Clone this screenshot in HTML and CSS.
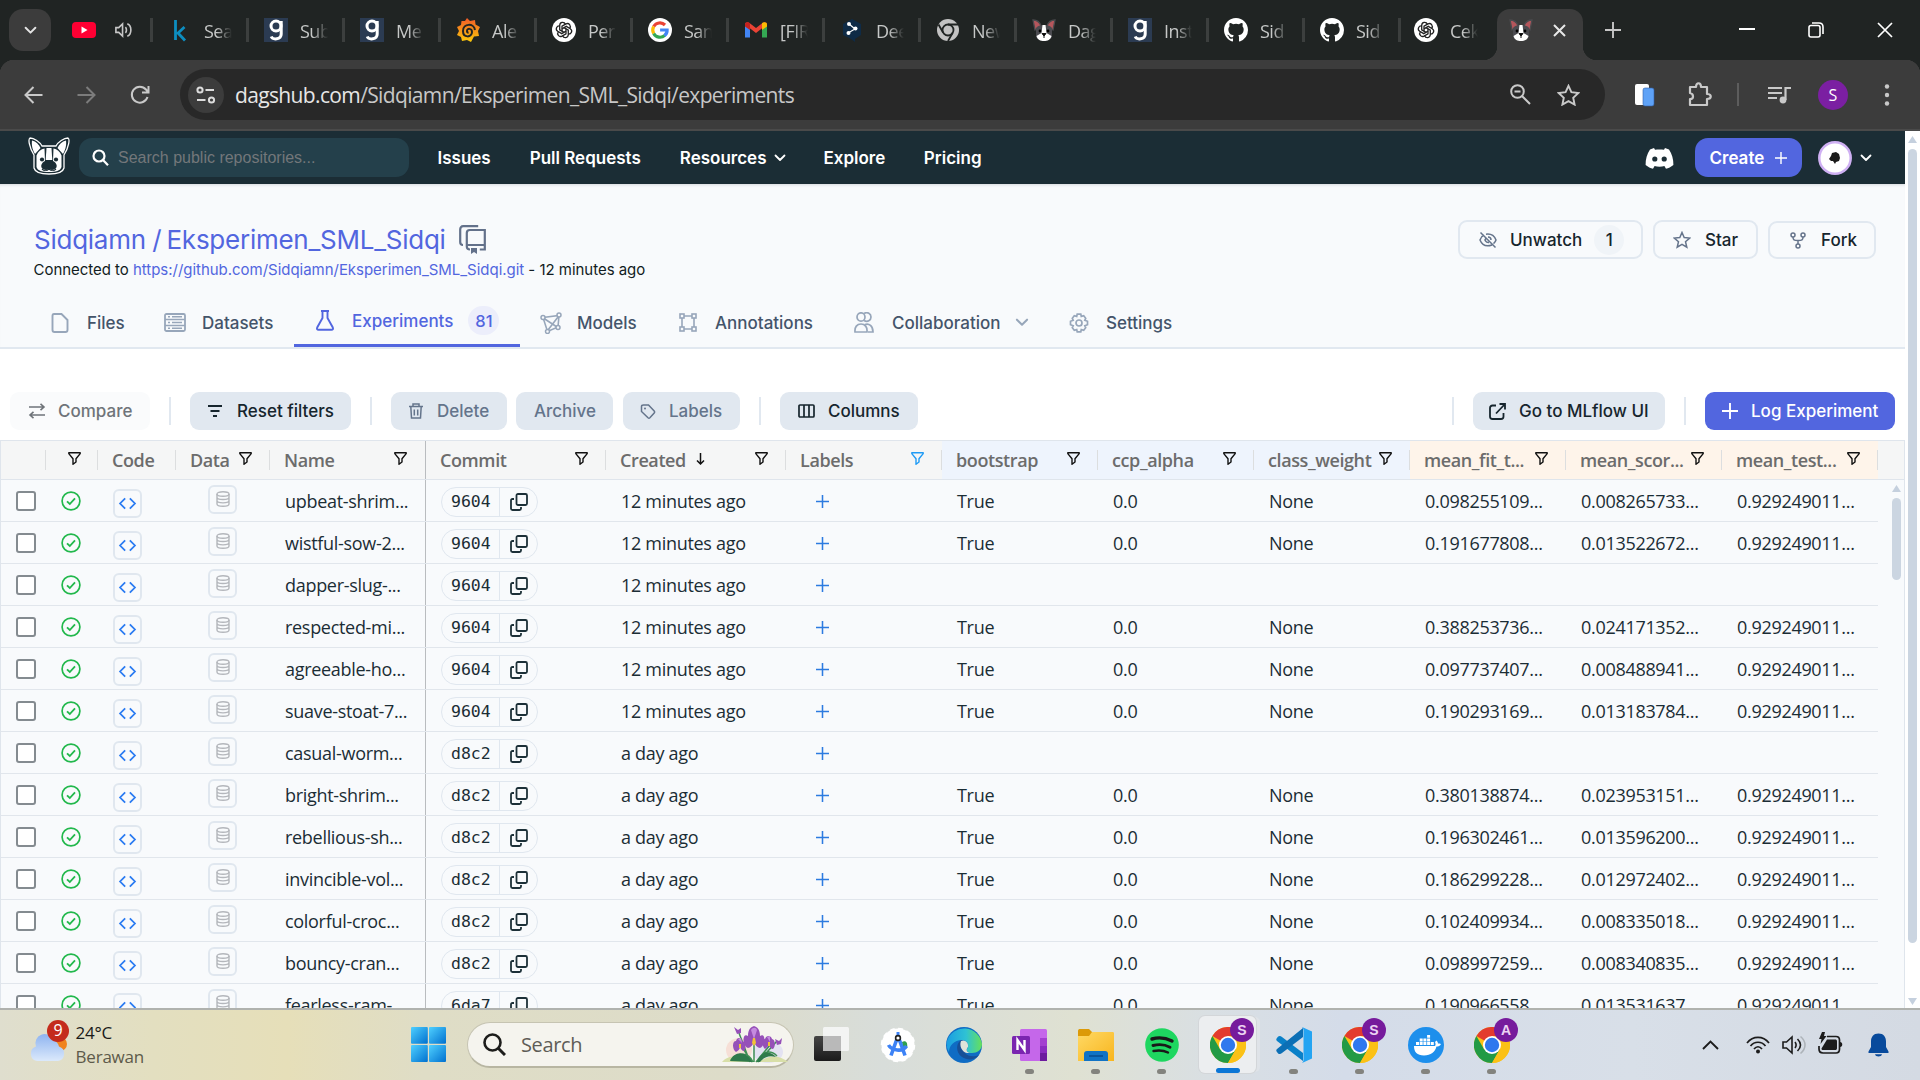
FILE: index.html
```html
<!DOCTYPE html>
<html lang="en">
<head>
<meta charset="utf-8">
<title>Sidqiamn/Eksperimen_SML_Sidqi - Experiments</title>
<link rel="stylesheet" href="styles.css">
</head>
<body>
<svg class="defs" aria-hidden="true">
  <linearGradient id="gWin" x1="0" y1="0" x2="1" y2="1"><stop offset="0" stop-color="#4fd0ff"/><stop offset="1" stop-color="#0070cf"/></linearGradient>
  <linearGradient id="gEdge" x1="0" y1="0" x2="1" y2="0"><stop offset="0" stop-color="#1b9de2"/><stop offset=".55" stop-color="#2fc2d4"/><stop offset="1" stop-color="#66e05a"/></linearGradient>
  <linearGradient id="gCloud" x1="0" y1="0" x2="0" y2="1"><stop offset="0" stop-color="#8fb4f0"/><stop offset="1" stop-color="#dbe9fb"/></linearGradient>
  <linearGradient id="gFolder" x1="0" y1="0" x2="1" y2="1"><stop offset="0" stop-color="#ffd965"/><stop offset="1" stop-color="#f8b51e"/></linearGradient>
  <linearGradient id="gDark" x1="0" y1="0" x2="0" y2="1"><stop offset="0" stop-color="#454545"/><stop offset="1" stop-color="#1a1a1a"/></linearGradient>
  <linearGradient id="gGraf" x1="0" y1="0" x2="0" y2="1"><stop offset="0" stop-color="#f05a28"/><stop offset="1" stop-color="#fbca0a"/></linearGradient>
  <symbol id="i-chev" viewBox="0 0 12 8"><path d="M1.5 1.5 6 6l4.500-4.500" fill="none" stroke="currentColor" stroke-width="1.800" stroke-linecap="round" stroke-linejoin="round"/></symbol>
  <symbol id="i-yt" viewBox="0 0 24 16"><rect width="24" height="16" rx="4" fill="#ff0033"/><path d="m9.500 4.500 6 3.500-6 3.500z" fill="#fff"/></symbol>
  <symbol id="i-spk" viewBox="0 0 20 18"><path d="M2 6.500h3l4-4v13l-4-4H2zM12 6c1.500 1.500 1.500 4.500 0 6M14 2.500c5 2 5 11 0 13" fill="none" stroke="#c7c7c7" stroke-width="1.700"/></symbol>
  <symbol id="i-k" viewBox="0 0 24 24"><path d="M7.500 2v20M16.500 9 9 16m1-1 7 7.500" fill="none" stroke="#0d8ec0" stroke-width="2.800"/></symbol>
  <symbol id="i-g" viewBox="0 0 24 24"><rect width="24" height="24" fill="#2b3b52"/><circle cx="12" cy="8" r="5" fill="none" stroke="#fff" stroke-width="3"/><path d="M17.200 3v13c0 6-8.500 6-10 2.500" fill="none" stroke="#fff" stroke-width="3"/></symbol>
  <symbol id="i-graf" viewBox="0 0 24 24"><path d="m11 0 3 3 5-1 .5 4.500L24 9l-2 4 1 5-5 .5L15 24l-4-2-5 1-1-4-4-2 2-4-2-4 4-2 .5-4L9 3z" fill="url(#gGraf)"/><path d="M19 12c-1-7-12-7-12 1 0 7 9 7 9 1 0-4-5-4-5-1 0 1 .7 1.700 1.600 1.700" fill="none" stroke="#202423" stroke-width="2"/></symbol>
  <symbol id="i-gpt" viewBox="0 0 24 24"><circle cx="12" cy="12" r="12" fill="#fff"/><g fill="none" stroke="#222" stroke-width="1.300"><g id="petal"><path d="M10 13.200V8.200l4-2.300c3-1.500 5.500 2 3.600 4.500"/></g><use href="#petal" transform="rotate(60 12 12)"/><use href="#petal" transform="rotate(120 12 12)"/><use href="#petal" transform="rotate(180 12 12)"/><use href="#petal" transform="rotate(240 12 12)"/><use href="#petal" transform="rotate(300 12 12)"/></g></symbol>
  <symbol id="i-goo" viewBox="0 0 24 24"><circle cx="12" cy="12" r="12" fill="#fff"/><g fill="none" stroke-width="3.200"><path d="M17 7A7.200 7.200 0 0 0 5.700 8.500" stroke="#ea4335"/><path d="M5.700 8.500a7.200 7.200 0 0 0 0 7" stroke="#fbbc05"/><path d="M5.700 15.500A7.200 7.200 0 0 0 16.800 17.400" stroke="#34a853"/><path d="M16.500 17.600c2-1.500 2.700-3.500 2.600-5.600h-7" stroke="#4285f4"/></g></symbol>
  <symbol id="i-mail" viewBox="0 0 24 24"><path d="M1 6v13.500h5V10z" fill="#4285f4"/><path d="M23 6v13.500h-5V10z" fill="#34a853"/><path d="M1 6.500C1 4 4 3.500 5.500 5L12 10l6.500-5C20 3.500 23 4 23 6.500L12 15z" fill="#ea4335"/><path d="M1 6.500C1 4 4 3.500 6 5.200V12L1 8.500z" fill="#c5221f"/><path d="M23 6.500c0-2.500-3-3-5-1.300V12l5-3.500z" fill="#fbbc04"/></symbol>
  <symbol id="i-deep" viewBox="0 0 24 24"><path d="m12 1 9 5v11l-6 4v3l-4-3-8-4V6z" fill="#0f2b46"/><path d="m9 6 6 5-7 4" fill="none" stroke="#fff" stroke-width="1.200"/><circle cx="9" cy="6" r="2" fill="#fff"/><circle cx="15.500" cy="10.500" r="2" fill="#fff"/><circle cx="8.500" cy="15" r="2" fill="#fff"/></symbol>
  <symbol id="i-newt" viewBox="0 0 24 24"><circle cx="12" cy="12" r="11" fill="#c3c3c3"/><circle cx="12" cy="12" r="5.500" fill="#c3c3c3" stroke="#202423" stroke-width="1.800"/><path d="M12 6.500h10M7.200 14.700 2.500 6.500M16.700 14.700 12 23" stroke="#202423" stroke-width="1.800"/></symbol>
  <symbol id="i-dog" viewBox="0 0 24 24"><path d="M1 2c4 0 7 3 8 6l-6 4zM23 2c-4 0-7 3-8 6l6 4z" fill="#b5565c" stroke="#4b4b4e" stroke-width="1.300"/><path d="M4 10c2-4 14-4 16 0v8c0 3-4 4-8 4s-8-1-8-4z" fill="#4b4b50"/><path d="M10.500 7h3l1 8 5 3c-1 4-4 5-7.500 5s-6.500-1-7.500-5l5-3z" fill="#fff"/><circle cx="8" cy="13" r="1.400"/><circle cx="16" cy="13" r="1.400"/><path d="M10 15.500h4L12 18zM12 18v2" stroke="#111"/></symbol>
  <symbol id="i-gh" viewBox="0 0 16 16"><path fill="#fff" d="M8 0C3.580 0 0 3.580 0 8c0 3.540 2.290 6.530 5.470 7.590.4.070.55-.17.55-.38 0-.19-.01-.82-.01-1.490-2.010.37-2.530-.49-2.690-.94-.09-.23-.48-.94-.82-1.130-.28-.15-.68-.52-.01-.53.63-.01 1.080.58 1.230.82.72 1.210 1.870.87 2.330.66.07-.52.28-.87.51-1.070-1.780-.2-3.640-.89-3.640-3.950 0-.87.31-1.590.82-2.150-.08-.2-.36-1.020.08-2.120 0 0 .67-.21 2.200.82a7.600 7.600 0 0 1 4 0c1.530-1.040 2.200-.82 2.200-.82.44 1.100.16 1.920.08 2.120.51.56.82 1.270.82 2.150 0 3.070-1.870 3.750-3.650 3.950.29.25.54.73.54 1.480 0 1.070-.01 1.930-.01 2.200 0 .21.15.46.55.38A8 8 0 0 0 16 8c0-4.420-3.580-8-8-8z"/></symbol>
  <symbol id="i-funnel" viewBox="0 0 13 13"><path d="M.8.8h11.400v.8L8 6.800V10l-3 2.300V6.800L.8 1.600z" fill="none" stroke="currentColor" stroke-width="1.400" stroke-linejoin="round"/></symbol>
  <symbol id="i-check" viewBox="0 0 20 20"><circle cx="10" cy="10" r="8.900" fill="none" stroke="#22b84c" stroke-width="1.700"/><path d="m6 10.300 2.800 2.700 5.200-5.700" fill="none" stroke="#22b84c" stroke-width="1.800"/></symbol>
  <symbol id="i-code" viewBox="0 0 20 14"><path d="M7.500 1.500 2 7l5.500 5.500M12.500 1.500 18 7l-5.500 5.500" fill="none" stroke="#2a7bf2" stroke-width="1.900"/></symbol>
  <symbol id="i-db" viewBox="0 0 14 16"><g fill="none" stroke="#b4b7bc" stroke-width="1.400"><ellipse cx="7" cy="3" rx="6" ry="2.200"/><path d="M1 3v10c0 3 12 3 12 0V3M1 6.300c0 3 12 3 12 0M1 9.600c0 3 12 3 12 0"/></g></symbol>
  <symbol id="i-copy" viewBox="0 0 18 18"><g fill="none" stroke="#1c3038" stroke-width="1.800"><rect x="6.500" y="1" width="10.500" height="11" rx="1.500"/><path d="M4 6H2.500C1.500 6 1 6.500 1 7.500v8c0 1 .5 1.500 1.500 1.500h7c1 0 1.500-.5 1.500-1.500V14"/></g></symbol>
  <symbol id="i-plus" viewBox="0 0 16 16"><path d="M8 0v16M0 8h16" stroke="currentColor" stroke-width="1.900"/></symbol>
  <symbol id="i-chrome" viewBox="0 0 36 36"><circle cx="18" cy="18" r="18" fill="#fbc116"/><path d="M18 18 2.400 9A18 18 0 0 1 33.600 9H18z" fill="#e33b2e"/><path d="M2.400 9 10.200 22.500 18 18l7.800 4.500L18 36A18 18 0 0 1 2.400 9z" fill="#229a45"/><path d="M18 9h15.600A18 18 0 0 1 18 36l7.800-13.500z" fill="#fbc116"/><circle cx="18" cy="18" r="9" fill="#fff"/><circle cx="18" cy="18" r="7.200" fill="#2f78ee"/></symbol>
</svg>

<header class="tabstrip">
  <button class="tabsearch"><svg width="13" height="9"><use href="#i-chev"/></svg></button>
  <div class="pinned"><svg width="24" height="16"><use href="#i-yt"/></svg><svg width="19" height="18"><use href="#i-spk"/></svg></div>
  <div class="tab"><svg width="24" height="24"><use href="#i-k"/></svg><span>Sea</span></div>
  <div class="tab"><svg width="24" height="24"><use href="#i-g"/></svg><span>Sub</span></div>
  <div class="tab"><svg width="24" height="24"><use href="#i-g"/></svg><span>Me</span></div>
  <div class="tab"><svg width="24" height="24"><use href="#i-graf"/></svg><span>Ale</span></div>
  <div class="tab"><svg width="24" height="24"><use href="#i-gpt"/></svg><span>Per</span></div>
  <div class="tab"><svg width="24" height="24"><use href="#i-goo"/></svg><span>San</span></div>
  <div class="tab"><svg width="24" height="24"><use href="#i-mail"/></svg><span>[FIR</span></div>
  <div class="tab"><svg width="24" height="24"><use href="#i-deep"/></svg><span>Dee</span></div>
  <div class="tab"><svg width="24" height="24"><use href="#i-newt"/></svg><span>New</span></div>
  <div class="tab"><svg width="24" height="24"><use href="#i-dog"/></svg><span>Dag</span></div>
  <div class="tab"><svg width="24" height="24"><use href="#i-g"/></svg><span>Inst</span></div>
  <div class="tab"><svg width="24" height="24"><use href="#i-gh"/></svg><span>Sid</span></div>
  <div class="tab"><svg width="24" height="24"><use href="#i-gh"/></svg><span>Sid</span></div>
  <div class="tab last"><svg width="24" height="24"><use href="#i-gpt"/></svg><span>Cek</span></div>
  <div class="tab-active"><svg width="24" height="24"><use href="#i-dog"/></svg><svg width="13" height="13" viewBox="0 0 13 13"><path d="m1 1 11 11M12 1 1 12" stroke="#e8e8e8" stroke-width="2"/></svg></div>
  <button class="newtab"><svg width="16" height="16"><use href="#i-plus"/></svg></button>
  <div class="winctl">
    <svg width="16" height="16" viewBox="0 0 16 16"><path d="M0 7h16" stroke="#fff" stroke-width="2"/></svg>
    <svg width="16" height="16" viewBox="0 0 16 16"><g fill="none" stroke="#fff" stroke-width="1.600"><rect x="1" y="3.500" width="11" height="11.500" rx="2"/><path d="M4 1h7c3 0 4 1 4 4v7"/></g></svg>
    <svg width="16" height="16" viewBox="0 0 16 16"><path d="m1 1 14 14M15 1 1 15" stroke="#fff" stroke-width="1.700"/></svg>
  </div>
</header>

<div class="navbar">
  <div class="navbtns">
    <svg width="19" height="18" viewBox="0 0 19 18"><path d="M18.500 9H2M9.500 1 1.500 9l8 8" fill="none" stroke="#c9c9c9" stroke-width="2"/></svg>
    <svg width="19" height="18" viewBox="0 0 19 18"><path d="M.5 9H17M9.500 1l8 8-8 8" fill="none" stroke="#7c7c7c" stroke-width="2"/></svg>
    <svg width="20" height="20" viewBox="0 0 20 20"><path d="M17.500 12A8 8 0 1 1 16 4.500L18 7M18.500 1v6.500H12" fill="none" stroke="#c9c9c9" stroke-width="2"/></svg>
  </div>
  <div class="omnibox">
    <span class="tune"><svg width="20" height="18" viewBox="0 0 20 18"><g fill="none" stroke="#dcdcdc" stroke-width="2"><circle cx="4" cy="4" r="2.600"/><path d="M9.500 4H18M1 14h8.500"/><circle cx="15.500" cy="14" r="2.600"/></g></svg></span>
    <span class="url"><b>dagshub.com</b>/Sidqiamn/Eksperimen_SML_Sidqi/experiments</span>
    <svg class="zoomer" width="21" height="21" viewBox="0 0 21 21"><g fill="none" stroke="#c9c9c9" stroke-width="2"><circle cx="7.500" cy="7.500" r="6.300"/><path d="m12 12 8 8M4.500 7.500h6"/></g></svg>
    <svg width="23" height="22" viewBox="0 0 23 22"><path d="m11.500 1.800 2.900 6.400 7 .8-5.200 4.800 1.400 6.800-6.100-3.400-6.100 3.400 1.400-6.800L1.600 9l7-.8z" fill="none" stroke="#c9c9c9" stroke-width="1.900"/></svg>
  </div>
  <div class="exts">
    <svg width="20" height="24" viewBox="0 0 20 24"><rect x="0" y="1" width="14" height="21" rx="2" fill="#fff"/><rect x="8" y="5" width="11" height="18" rx="2" fill="#5ea2f7" stroke="#2f5fa8" stroke-width=".6"/></svg>
    <svg width="25" height="25" viewBox="0 0 25 25"><path d="M3 5h6c0-5 5-5 5 0h6v7c5 0 5 5 0 5v6H3v-6c4 0 4-5 0-6z" fill="none" stroke="#c9c9c9" stroke-width="2.200" stroke-linejoin="round"/></svg>
    <i class="vsep"></i>
    <svg width="23" height="18" viewBox="0 0 23 18"><path d="M0 2h14M0 7h14M0 12h9" stroke="#c9c9c9" stroke-width="2"/><circle cx="15" cy="14" r="3.400" fill="#c9c9c9"/><path d="M17.500 14V2H23" fill="none" stroke="#c9c9c9" stroke-width="2.200"/></svg>
    <span class="avatar-s">S</span>
    <svg width="6" height="22" viewBox="0 0 6 22"><g fill="#c9c9c9"><circle cx="3" cy="2.500" r="2.200"/><circle cx="3" cy="11" r="2.200"/><circle cx="3" cy="19.500" r="2.200"/></g></svg>
  </div>
</div>

<div class="viewport">
<main class="page">
  <nav class="site">
    <svg class="logo" width="42" height="38" viewBox="0 0 42 38"><path d="M6 18C1 10 0 2 2 1c4 0 10 4 12 8h14c2-4 8-8 12-8 2 1 1 9-4 17v13c-1 4-6 6-15 6S7 35 6 31z" fill="#1b2d35" stroke="#fff" stroke-width="1.300"/><path d="M4 3.500c4 1 7 4 8.500 7.500l-5.500 6C4 12 3.500 7 4 3.500zM38 3.500c-4 1-7 4-8.500 7.500l5.500 6c3-5 3.500-10 3-13.500z" fill="#fff"/><path d="M18.500 11h5l.8 12h-6.600z" fill="#fff"/><path d="M8.500 18.500c1.500-4 4.500-6.500 8-7l.5 12.500c-4 2-5 6-2 8 2 1.300 4 1.300 6 0 2 1.300 4 1.300 6 0 3-2 2-6-2-8l.5-12.500c3.500.5 6.500 3 8 7v11.500c-1 4-6 5-12.500 5s-11.500-1-12.500-5z" fill="#fff"/><circle cx="14" cy="22.500" r="2.100" fill="#1b2d35"/><circle cx="28" cy="22.500" r="2.100" fill="#1b2d35"/><path d="M17.500 25.500h7c.5 1.500-2 3.500-3.500 3.500s-4-2-3.500-3.500z" fill="#1b2d35"/><path d="M21 29v3c-2 2-5 2-7 0M21 32c2 2 5 2 7 0" fill="none" stroke="#1b2d35" stroke-width="1.100"/></svg>
    <div class="search"><svg width="17" height="17" viewBox="0 0 17 17"><g fill="none" stroke="#fff" stroke-width="2.200"><circle cx="7" cy="7" r="5.500"/><path d="m11 11 5 5.200"/></g></svg><span>Search public repositories...</span></div>
    <div class="links"><a>Issues</a><a>Pull Requests</a><a class="res"><span>Resources</span><svg width="12" height="8"><use href="#i-chev"/></svg></a><a class="explore">Explore</a><a>Pricing</a></div>
    <svg class="discord" width="29" height="22" viewBox="0 0 29 22"><path d="M9 1 5 2.500C2 7 .5 12 .6 18c2.400 2 5 3.300 7.400 3.800l1.600-2.700c3 .9 6.800.9 9.800 0L21 21.800c2.400-.5 5-1.800 7.400-3.800.1-6-1.400-11-4.400-15.500L20 1l-1 1.800c-3-.5-6-.5-9 0z" fill="#fff"/><circle cx="9.800" cy="12" r="2.600" fill="#1b2d35"/><circle cx="19.200" cy="12" r="2.600" fill="#1b2d35"/></svg>
    <button class="create"><span>Create</span><svg width="12" height="12"><use href="#i-plus"/></svg></button>
    <span class="user"><svg width="34" height="34" viewBox="0 0 34 34"><circle cx="17" cy="17" r="15.700" fill="#fff" stroke="#cfb0f3" stroke-width="2.500"/><path d="m11 18 2-3 1-3 4-1 3 2 1 4-1 3-3 1-1 2-2-3-2 0z" fill="#1a1a1a"/></svg></span>
    <svg class="uchev" width="12" height="8"><use href="#i-chev"/></svg>
  </nav>

  <section class="repo">
    <div class="repo-top">
      <div class="repo-id">
        <h1><span>Sidqiamn</span><em>/</em><span>Eksperimen_SML_Sidqi</span>
          <svg width="27" height="29" viewBox="0 0 27 29"><g fill="none" stroke="#63718a" stroke-width="2.200"><path d="M4 20c-2 0-2.800-1-2.800-3V4.500c0-2 1-3.300 3-3.300h15"/><path d="M11 24.500c-2 0-3.200-.8-3.200-3V8c0-2 1-3 3-3h15v19.500h-5M8 20h17"/></g><path d="M12 23h6v6l-3-2-3 2z" fill="#63718a"/></svg></h1>
        <p>Connected to <a>https://github.com/Sidqiamn/Eksperimen_SML_Sidqi.git</a> - 12 minutes ago</p>
      </div>
      <div class="actions">
        <button class="b-watch"><svg width="18" height="18" viewBox="0 0 18 18"><g fill="none" stroke="#65748b" stroke-width="1.500"><path d="M5 4C3 5 1.500 7 1 9c2 5 6 7 12 5M7 3.200c5-.7 8.500 2 10 5.800-.5 1.500-1.300 2.700-2.500 3.700M1.500 1.500l15 15M7 7c-2 2 0 5 3 4.500M9 6c1.800 0 3 1.200 3 3"/></g></svg><span>Unwatch</span><i>1</i></button>
        <button class="b-star"><svg width="18" height="18" viewBox="0 0 18 18"><path d="m9 1.500 2.200 5.100 5.500.5-4.200 3.600 1.300 5.500L9 13.300l-4.800 2.900 1.300-5.500L1.300 7.100l5.500-.5z" fill="none" stroke="#65748b" stroke-width="1.500"/></svg><span>Star</span></button>
        <button class="b-fork"><svg width="16" height="17" viewBox="0 0 16 17"><g fill="none" stroke="#65748b" stroke-width="1.500"><circle cx="3" cy="3" r="2"/><circle cx="13" cy="3" r="2"/><circle cx="8" cy="14" r="2"/><path d="M3 5c0 3 1 3.500 5 3.500S13 8 13 5M8 8.500V12"/></g></svg><span>Fork</span></button>
      </div>
    </div>
    <div class="repo-tabs">
      <a class="rt fi-tab"><svg width="18" height="20" viewBox="0 0 18 20"><path d="M3 1h7.500L16.500 7v10c0 1.500-.5 2-2 2h-11c-1.500 0-2-.5-2-2V3c0-1.500.5-2 1.500-2z" fill="none" stroke="#97a6ba" stroke-width="1.900"/></svg><span>Files</span></a>
      <a class="rt ds"><svg width="22" height="19" viewBox="0 0 22 19"><g fill="none" stroke="#97a6ba" stroke-width="1.800"><rect x="1" y="1" width="20" height="17" rx="1.500"/><path d="M1 6.500h20M1 12.500h20M4 3.800h2M8 3.800h10M4 9.500h2M8 9.500h10M4 15.300h2M8 15.300h10" stroke-width="1.400"/></g></svg><span>Datasets</span></a>
      <a class="rt on"><svg width="18" height="21" viewBox="0 0 18 21"><path d="M5 1h8M6.500 1v7L1.200 17.500c-.6 1.500 0 2.300 1.300 2.300h13c1.300 0 1.900-.8 1.300-2.300L11.500 8V1" fill="none" stroke="#5266df" stroke-width="1.900"/></svg><span>Experiments</span><i>81</i></a>
      <a class="rt md"><svg width="22" height="22" viewBox="0 0 22 22"><g fill="none" stroke="#97a6ba" stroke-width="1.600"><path d="M3 5.500 19 3.500 18 15 7.500 19.500zM4 6.500l13 8.500M18 5 8 18"/></g><g fill="#f8fafc" stroke="#97a6ba" stroke-width="1.500"><circle cx="3" cy="5.500" r="2"/><circle cx="19" cy="3" r="2"/><circle cx="18" cy="15.500" r="2"/><circle cx="7.500" cy="19.500" r="2"/></g></svg><span>Models</span></a>
      <a class="rt an"><svg width="18" height="19" viewBox="0 0 18 19"><g fill="none" stroke="#97a6ba" stroke-width="1.600"><path d="M5 3h8M5 16h8M3 5v9M15 5v9"/><rect x="1" y="1" width="4" height="4"/><rect x="13" y="1" width="4" height="4"/><rect x="1" y="14" width="4" height="4"/><rect x="13" y="14" width="4" height="4"/></g></svg><span>Annotations</span></a>
      <a class="rt co"><svg width="20" height="21" viewBox="0 0 20 21"><g fill="none" stroke="#97a6ba" stroke-width="1.700"><ellipse cx="7" cy="5" rx="4" ry="4.200"/><path d="M10 1.500c3.500-2 7 0 7 3.500s-3.500 5.500-7 3.500M1 20c-.5-5 2-8 6-8s6.500 3 6 8zM11 12.500c4-1.500 8 1.500 8 7.500h-5"/></g></svg><span>Collaboration</span><svg class="cv" width="14" height="9"><use href="#i-chev"/></svg></a>
      <a class="rt se"><svg width="20" height="20" viewBox="0 0 20 20"><g fill="none" stroke="#97a6ba" stroke-width="1.700"><path d="m8.200 1.200h3.600l.5 2.200 2.400-.6 2 2.500-.9 2 2.700 1v3.400l-2.700 1 .9 2-2 2.500-2.400-.6-.5 2.200H8.200l-.5-2.200-2.400.6-2-2.500.9-2-2.700-1V8.300l2.700-1-.9-2 2-2.500 2.400.6z"/><circle cx="10" cy="10" r="3"/></g></svg><span>Settings</span></a>
    </div>
  </section>

  <div class="toolbar">
    <button class="tb compare"><svg width="18" height="16" viewBox="0 0 18 16"><path d="M1 4h15M12.500.8 16 4l-3.500 3.200M17 12H2M5.500 8.800 2 12l3.500 3.200" fill="none" stroke="currentColor" stroke-width="1.600"/></svg><span>Compare</span></button>
    <i class="sep"></i>
    <button class="tb reset"><svg width="14" height="12" viewBox="0 0 14 12"><path d="M0 1h14M2.500 6h9M5 11h4" stroke="currentColor" stroke-width="1.800"/></svg><span>Reset filters</span></button>
    <i class="sep"></i>
    <button class="tb dim del"><svg width="14" height="16" viewBox="0 0 14 16"><path d="M0 3.500h14M4 3.500V1h6v2.500M1.800 3.500l.7 11.500h9l.7-11.500M5.300 6.500v6M8.700 6.500v6" fill="none" stroke="currentColor" stroke-width="1.500"/></svg><span>Delete</span></button>
    <button class="tb dim arc"><span>Archive</span></button>
    <button class="tb dim lab"><svg width="16" height="15" viewBox="0 0 16 15"><path d="M1.500 2.500v5l6.500 6.300c.7.600 1.200.6 1.900 0L14.200 9c.6-.7.600-1.200 0-1.900L8.500 1h-5c-1.300 0-2 .5-2 1.500z" fill="none" stroke="currentColor" stroke-width="1.500"/><circle cx="5" cy="4.500" r="1" fill="currentColor"/></svg><span>Labels</span></button>
    <i class="sep"></i>
    <button class="tb colb"><svg width="17" height="14" viewBox="0 0 17 14"><g fill="none" stroke="currentColor" stroke-width="1.700"><rect x="1" y="1" width="15" height="12" rx="1"/><path d="M6 1v12M11 1v12"/></g></svg><span>Columns</span></button>
    <i class="sep push"></i>
    <button class="tb mlf"><svg width="17" height="17" viewBox="0 0 17 17"><path d="M7 2.500H3.500C2 2.500 1 3.500 1 5v8.500C1 15 2 16 3.500 16H12c1.500 0 2.500-1 2.500-2.500V10M10.500 1H16v5.500M16 1 7 10.500" fill="none" stroke="currentColor" stroke-width="1.800"/></svg><span>Go to MLflow UI</span></button>
    <i class="sep"></i>
    <button class="tb log"><svg width="16" height="16"><use href="#i-plus"/></svg><span>Log Experiment</span></button>
  </div>

  <div class="grid">
    <div class="ghead" id="ghead"></div>
    <div class="gbody">
      <div class="grows" id="grows"></div>
      <div class="gscroll"><b class="up"></b><i></i></div>
    </div>
  </div>
</main>
<aside class="vscroll"><b class="up"></b><i></i><b class="down"></b></aside>
</div>

<footer class="taskbar">
  <div class="weather">
    <svg width="46" height="46" viewBox="0 0 46 46"><circle cx="32" cy="23" r="7" fill="#f0831e"/><path d="M9 40a7.500 7.500 0 0 1-1-14.500 9 9 0 0 1 17-6.500 9 9 0 0 1 6 6.500A7.500 7.500 0 0 1 30 40z" fill="url(#gCloud)"/><circle cx="30" cy="10" r="11" fill="#c42b1c"/></svg><em>9</em>
    <div><strong>24°C</strong><span>Berawan</span></div>
  </div>
  <svg class="start" width="35" height="35" viewBox="0 0 35 35"><g fill="url(#gWin)"><rect width="16.800" height="16.800" rx="1"/><rect x="18" width="17" height="16.800" rx="1"/><rect y="18" width="16.800" height="17" rx="1"/><rect x="18" y="18" width="17" height="17" rx="1"/></g></svg>
  <div class="tsearch"><svg width="23" height="23" viewBox="0 0 23 23"><g fill="none" stroke="#1d1d1b" stroke-width="2.600"><circle cx="9.500" cy="9.500" r="8"/><path d="m15 15 7 7" stroke-width="3"/></g></svg><span>Search</span>
    <svg class="flower" width="66" height="38" viewBox="0 0 66 38"><ellipse cx="17" cy="25" rx="13" ry="12" fill="#f6dfd6"/><ellipse cx="46" cy="27" rx="15" ry="11" fill="#e3e2f2"/><path d="M0 37c4-5 12-7 20-5l12 5zM66 37c-6-5-14-7-22-4l-8 4z" fill="#d8dfa8"/><g fill="none" stroke="#3f8f55" stroke-width="1.500"><path d="M32 37V18M30 37 20 22M34 37 48 20M31 37C26 26 16 28 9 35M35 37c6-12 14-12 20-6M28 37 17 8M36 37 55 16"/></g><path d="M8 36c4-10 16-11 22 1zM35 37c3-11 13-12 19-5-7-2-12 0-16 5z" fill="#2f7a4b"/><g fill="#9650b8"><path d="M26 11c-6-4-6 10 0 12 5-1 6-6 6-9 0 3 1 8 6 9 6-2 6-16 0-12 0-7-3-9-6-10-3 1-6 3-6 10z"/><path d="M14 16c-4 0-4 8 0 11 2-1 4-3 4-5 1 2 2 4 4 4 3-3 1-10-2-10-1-4-5-4-6 0zM43 14c-4 0-3 7 0 10 2-1 3-3 4-4 1 2 2 4 4 4 3-3 2-10-1-10-1-4-6-4-7 0z"/><path d="m12 2 4 3 3-2v5l-4 1zM53 14l4 2 3-3-1 6-4 1z"/></g><g fill="#c58be0"><path d="M29 5c2-3 5-3 6 0l-3 9zM16 14l3-1 1 5zM45 12l3-1 0 6z"/></g><path d="M31 13h2l1 5-2 3-2-3zM17 19h2v4h-2zM46 17h2v4h-2z" fill="#f2c437"/></svg></div>
  <svg class="tv" width="35" height="35" viewBox="0 0 35 35"><rect y="9" width="27" height="25" rx="2" fill="url(#gDark)"/><rect x="9" y="0" width="26" height="24" rx="1.500" fill="#f4f4f4" opacity=".95"/><rect x="9" y="9" width="18" height="15" fill="#b9b9b9"/></svg>
  <div class="apps">
    <span class="app"><svg width="36" height="36" viewBox="0 0 36 36"><circle cx="18" cy="18" r="16.500" fill="#fff" stroke="#fff" stroke-width="1.500" stroke-dasharray="5 3.600"/><path d="M22 15c4-2 6 1 5 6l-4 1z" fill="#2e9e4f"/><path d="M18 9 11 28.500M18 9l7 19.500M8.500 18c3 5.500 14 7.500 18 1" fill="none" stroke="#3c82f6" stroke-width="3.600"/><path d="M18 5v4" stroke="#3c82f6" stroke-width="3"/><circle cx="18" cy="11" r="2.400" fill="#fff" stroke="#222" stroke-width="1.600"/></svg></span>
    <span class="app"><svg width="36" height="36" viewBox="0 0 36 36"><circle cx="18" cy="18" r="18" fill="#0f6cc4"/><path d="M1 14A18 18 0 0 1 36 17c0 6-5 9-10 9-4 0-6-2-5-4 3-4 0-9-5-9-8 0-13 6-13 12C1 22 0 18 1 14z" fill="url(#gEdge)"/><path d="M16 13c-6 2-7 12 0 17 6 4 13 3 17-2-4 2-11 2-14-2-2-3-2-5-1-7 1-3 0-5-2-6z" fill="#174f96"/><path d="M15 14c4-2 8 2 7 6-2 2-2 5 2 6h-3c-5-1-8-7-6-12z" fill="#dfe3da"/></svg></span>
    <span class="app run"><svg width="36" height="36" viewBox="0 0 36 36"><rect x="8" y="2" width="27" height="32" rx="1.500" fill="#c567ea"/><path d="M28 11h7v8h-7z" fill="#a33fd0"/><path d="M28 19h7v7h-7z" fill="#8a2bc0"/><path d="M28 26h7v8h-7z" fill="#6c1a9e"/><rect y="9" width="18" height="18" rx="1.500" fill="#7a25b0"/><path d="M5.500 23V13l7 10V13" fill="none" stroke="#fff" stroke-width="2.400"/></svg></span>
    <span class="app run"><svg width="36" height="36" viewBox="0 0 36 36"><path d="M0 4c0-1 .5-2 1.500-2H11l4 4-3 5H0z" fill="#dc9a08"/><path d="M0 9h11l3-4h20.500c1 0 1.500.5 1.500 1.500V34H0z" fill="url(#gFolder)"/><path d="M6 34v-7c0-2 1-3 3-3h18c2 0 3 1 3 3v7z" fill="#1173c5"/><path d="M11 29h14" stroke="#0a4e92" stroke-width="1.600"/></svg></span>
    <span class="app run"><svg width="36" height="36" viewBox="0 0 36 36"><circle cx="18" cy="18" r="16.800" fill="#1ed760"/><g fill="none" stroke="#191919" stroke-linecap="round"><path d="M8 12c7-2 14-1 20 2" stroke-width="3.400"/><path d="M9 18.500c6-1.500 12-1 17 1.700" stroke-width="2.900"/><path d="M9.500 24c5-1 10-.8 14.500 1.500" stroke-width="2.400"/></g></svg></span>
    <span class="app sel"><svg width="36" height="36"><use href="#i-chrome"/></svg><em>S</em></span>
    <span class="app run"><svg width="36" height="36" viewBox="0 0 36 36"><path d="M1 11c1-2 3-3 5-1l21 16v8L1 14c-1-1-1-2 0-3z" fill="#0a80c8"/><path d="M1 25c1 2 3 3 5 1l21-16V1L1 22c-1 1-1 2 0 3z" fill="#0c6fb5"/><path d="M26 0 36 4.500v27L26 36c1-1 1.500-2 1.500-3V3c0-1-.5-2-1.500-3z" fill="#24a4f2"/></svg></span>
    <span class="app run"><svg width="36" height="36"><use href="#i-chrome"/></svg><em>S</em></span>
    <span class="app run"><svg width="36" height="36" viewBox="0 0 36 36"><circle cx="18" cy="18" r="18" fill="#1d8fec"/><g fill="#fff"><path d="M6 19h21c1-1 .5-3 0-4l1.500-1.500c1 1 1.500 2 1.500 3 1 0 2 0 3 .5-1 2-2.500 2.500-4.500 2.500C27 25 23 28.500 16 28.500 9 28.500 6 25 6 19z"/><path d="M8 15h3v3H8zM11.700 15h3v3h-3zM15.400 15h3v3h-3zM19.100 15h3v3h-3zM22.800 15h3v3h-3zM11.700 11.400h3v3h-3zM15.400 11.400h3v3h-3zM19.100 11.400h3v3h-3zM19.100 8h3v2.800h-3z"/></g></svg></span>
    <span class="app run"><svg width="36" height="36"><use href="#i-chrome"/></svg><em>A</em></span>
  </div>
  <div class="tray">
    <svg width="17" height="10" viewBox="0 0 17 10"><path d="m1 9 7.500-7.500L16 9" fill="none" stroke="#1c1c1c" stroke-width="1.900"/></svg>
    <svg class="wf" width="24" height="18" viewBox="0 0 24 18"><g fill="none" stroke="#1c1c1c" stroke-width="1.700"><path d="M1 7c6-7.500 16-7.500 22 0M4.500 10c4-5 11-5 15 0M8 13c2.500-3 5.500-3 8 0"/></g><circle cx="12" cy="15.500" r="2" fill="#1c1c1c"/></svg>
    <svg class="vo" width="24" height="20" viewBox="0 0 24 20"><g fill="none" stroke="#1c1c1c" stroke-width="1.600"><path d="M1 7h3.500L10 2v16l-5.500-5H1zM13 7c1.500 2 1.500 4 0 6M15.500 4c4 4 4 8 0 12"/><path d="M18.500 1.500c6 5 6 12 0 17" stroke="#adb3b9"/></g></svg>
    <svg class="ba" width="25" height="23" viewBox="0 0 25 23"><path d="M9 4.500h9c2 0 3.500 1 3.500 3.500v9c0 2.500-1.500 4-3.500 4H5c-2.500 0-4-1.500-4-4v-3" fill="none" stroke="#1c1c1c" stroke-width="1.700"/><path d="M9 7.500h8c1.500 0 2 .5 2 2V16c0 1.500-.5 2-2 2H5c-1 0-1.500-.5-1.500-1.500zM22 10c3 0 3 5 0 5zM4 0h3L6 4h2.500L2.500 12l1-5H1z" fill="#1c1c1c"/></svg>
    <svg class="be" width="21" height="24" viewBox="0 0 21 24"><path d="M10.500.5C5.500.5 3 4 3 8.500V14L.5 18.500V20h20v-1.500L18 14V8.500C18 4 15.500.5 10.500.5zM7 21.300h7c-.5 3-6.500 3-7 0z" fill="#084a9c"/></svg>
  </div>
</footer>
<script src="app.js"></script>
</body>
</html>
```
FILE: styles.css
```css
* { box-sizing: border-box; }
html, body { margin: 0; height: 100%; overflow: hidden; }
body { display: flex; flex-direction: column; width: 1920px; height: 1080px; font-family: "Open Sans", sans-serif; background: #fff; }
button { border: 0; padding: 0; background: none; font: inherit; color: inherit; }
svg { display: block; flex: none; }
i, em { font-style: normal; }
.defs { position: absolute; width: 0; height: 0; }

/* browser tab strip */
.tabstrip { display: flex; align-items: center; flex: none; height: 60px; padding-left: 9px; background: #202423; }
.tabsearch { display: flex; align-items: center; justify-content: center; flex: none; width: 42px; height: 42px; border-radius: 14px; background: #3c3c3c; color: #e3e3e3; }
.pinned { display: flex; align-items: center; gap: 18px; flex: none; width: 102px; height: 24px; padding-left: 21px; border-right: 3px solid #3c3f3e; }
.tab { display: flex; align-items: center; gap: 12px; flex: none; width: 96px; height: 24px; padding-left: 15px; border-right: 3px solid #3c3f3e; }
.tab span { width: 28px; overflow: hidden; white-space: nowrap; font-size: 18px; line-height: 28px; letter-spacing: -.5px; color: #c6c8c7; padding-top: 2px; -webkit-mask-image: linear-gradient(90deg, #000 45%, transparent); mask-image: linear-gradient(90deg, #000 45%, transparent); }
.tab.last { width: 93px; margin-left: -2px; border-right-color: transparent; }
.tab-active { position: relative; display: flex; align-items: center; gap: 20px; flex: none; width: 86px; height: 51px; margin: 9px 0 0 5px; padding: 0 0 9px 12px; border-radius: 13px 13px 0 0; background: #3c3c3c; }
.tab-active::before, .tab-active::after { content: ""; position: absolute; bottom: 0; width: 14px; height: 14px; background: radial-gradient(circle at 0 0, #202423 14px, #3c3c3c 14.500px); }
.tab-active::before { left: -14px; }
.tab-active::after { right: -14px; transform: scaleX(-1); }
.newtab { margin-left: 22px; color: #c7c7c7; }
.winctl { display: flex; gap: 53px; margin-left: auto; padding-right: 27px; }

/* browser toolbar */
.navbar { display: flex; align-items: center; flex: none; height: 71px; background: radial-gradient(circle at 14px 14px, #3c3c3c 14px, #202423 14.500px) 0 0 / 14px 14px no-repeat, radial-gradient(circle at 0 14px, #3c3c3c 14px, #202423 14.500px) 100% 0 / 14px 14px no-repeat, #3c3c3c; border-bottom: 2px solid #4a4a4a; }
.navbtns { display: flex; align-items: center; gap: 34px; padding-left: 24px; width: 180px; flex: none; }
.omnibox { display: flex; align-items: center; flex: none; width: 1425px; height: 51px; padding-left: 8px; border-radius: 26px; background: #282828; }
.tune { display: flex; align-items: center; justify-content: center; width: 36px; height: 36px; border-radius: 50%; background: #3c3c3c; }
.url { margin-left: 11px; font-size: 21px; letter-spacing: -.64px; color: #c7c7c7; white-space: nowrap; }
.url b { font-weight: 400; color: #e6e6e6; }
.zoomer { margin: 0 26px 0 auto; }
.omnibox > svg:last-child { margin-right: 25px; }
.exts { display: flex; align-items: center; flex: 1; padding-left: 30px; }
.exts svg:nth-child(2) { margin-left: 32px; }
.vsep { width: 2px; height: 23px; margin: 0 29px 0 25px; background: #5d5d5d; }
.avatar-s { display: flex; align-items: center; justify-content: center; width: 30px; height: 30px; margin: 0 36px 0 27px; border-radius: 50%; background: #7b1fa2; color: #fff; font-size: 16px; }

/* page frame */
.viewport { display: flex; flex: none; height: 879px; border-bottom: 2px solid #b0b2ae; }
.page { display: flex; flex-direction: column; width: 1905px; overflow: hidden; font-family: Inter, sans-serif; }
.vscroll { width: 15px; background: #fff; }
.up, .down { display: block; width: 9px; height: 7px; margin-left: 3px; background: #c5d0de; clip-path: polygon(50% 0, 100% 100%, 0 100%); }
.down { clip-path: polygon(0 0, 100% 0, 50% 100%); }
.vscroll .up { margin-top: 5px; }
.vscroll i { display: block; width: 9px; height: 794px; margin: 6px 0 55px 3px; border-radius: 5px; background: #cbd5e1; }

/* site navigation */
.site { display: flex; align-items: center; flex: none; height: 53px; padding-left: 28px; background: #1b2d35; color: #fff; font-size: 17px; font-weight: 600; }
.logo { margin-bottom: 3px; }
.search { display: flex; align-items: center; gap: 9px; width: 330px; height: 39px; margin-left: 9px; padding-left: 13px; border-radius: 13px; background: #24404b; font: 400 16px "Liberation Sans", Arial, sans-serif; color: #73777a; }
.links { display: flex; margin-left: 28.500px; gap: 39px; }
.res { display: flex; align-items: center; gap: 8px; margin-right: -2px; }
.explore { margin-right: -.5px; }
.discord { margin-left: auto; }
.create { display: flex; align-items: center; gap: 11px; width: 107px; height: 39px; margin-left: 21px; padding-left: 14.500px; border-radius: 13px; background: #5266df; }
.user { margin-left: 16px; }
.uchev { margin: 0 33px 0 8px; }

/* repository header */
.repo { display: flex; flex-direction: column; justify-content: space-between; flex: none; height: 165px; background: #f8fafc; border-bottom: 2px solid #e1e8f0; box-shadow: inset 0 3px 3px -2px #d5dade; }
.repo-top { display: flex; justify-content: space-between; padding: 36px 29px 0 34px; }
h1 { display: flex; align-items: center; margin: 3px 0 0; height: 33px; font-size: 26px; font-weight: 400; letter-spacing: -.25px; color: #5266df; }
h1 em { margin: 0 5px 0 6.500px; }
h1 svg { margin-left: 13px; }
.repo-id p { margin: 4px 0 0 -.5px; font-size: 15px; line-height: 20px; letter-spacing: -.03px; color: #111c22; white-space: pre; }
.repo-id a { color: #5266df; }
.actions { display: flex; align-items: flex-start; gap: 10px; font-size: 17px; font-weight: 500; color: #16252d; }
.actions button { display: flex; align-items: center; height: 39px; border: 2px solid #e1e8f0; border-radius: 9px; }
.b-watch { width: 185px; padding-left: 19px; gap: 13px; }
.b-watch i { display: grid; place-items: center; width: 30px; height: 30px; margin-left: -1px; border-radius: 50%; background: #f0f4f8; }
.b-star { width: 105px; padding-left: 18px; gap: 14px; }
.actions .b-fork { width: 108px; height: 38px; margin-top: 1px; padding-left: 20px; gap: 15px; }
.repo-tabs { display: flex; height: 53px; padding-left: 51px; color: #44546a; font-size: 17px; font-weight: 550; }
.rt { display: flex; align-items: center; gap: 18px; padding-top: 7px; height: 50px; }
.fi-tab { width: 72px; }
.ds { margin-left: 41px; gap: 16px; width: 110px; }
.on { width: 226px; height: 53px; margin-left: 20px; padding: 3px 0 0 22px; border-bottom: 3px solid #5266df; color: #5266df; }
.on i { display: grid; place-items: center; width: 31px; height: 29px; margin-left: -3px; border-radius: 15px; background: #eceefb; font-size: 16.500px; }
.md { gap: 15px; margin-left: 20px; width: 97px; }
.an { margin-left: 42px; width: 136px; }
.co { margin-left: 39px; width: 175px; }
.cv { margin-left: -3px; color: #97a6ba; }
.se { margin-left: 40px; gap: 17px; }

/* experiment toolbar */
.toolbar { display: flex; align-items: center; flex: none; height: 91px; padding: 33px 10px 0; }
.tb { display: flex; align-items: center; height: 38px; border-radius: 9px; background: #e1e8f0; color: #16252d; font-size: 17px; font-weight: 500; white-space: nowrap; }
.dim { color: #64748b; }
.sep { width: 2px; height: 28px; margin: 0 19px; background: #e1e8f0; }
.push { margin-left: auto; }
.compare { width: 140px; padding-left: 18px; gap: 12px; background: #fafbfc; color: #6f7479; }
.reset { width: 161px; padding-left: 18px; gap: 15px; }
.del { width: 116px; padding-left: 18px; gap: 14px; }
.arc { width: 97px; margin-left: 9px; padding-left: 18px; }
.lab { width: 117px; margin-left: 10px; padding-left: 17px; gap: 13px; }
.colb { width: 138px; padding-left: 18px; gap: 13px; }
.mlf { width: 192px; padding-left: 16px; gap: 13px; }
.log { width: 190px; padding-left: 17px; gap: 13px; background: #5266df; color: #fff; }

/* experiments grid */
.grid { display: flex; flex-direction: column; flex: 1; border: 1px solid #dfe5ec; border-bottom: 0; background: #f8fafc; font-family: "Open Sans", sans-serif; overflow: hidden; }
.ghead, .row { display: grid; grid-template-columns: 45px 52px 78px 94px 156px 180px 180px repeat(7, 156px); }
.ghead { flex: none; height: 39px; border-bottom: 1px solid #dfe5ec; background: #f5f6f6; }
.h { display: flex; align-items: center; padding: 0 18px 0 14px; position: relative; font-size: 18px; font-weight: 650; color: #6c6c6c; white-space: nowrap; letter-spacing: -.4px; }
.h::after { content: ""; position: absolute; right: 0; top: 9px; width: 1.500px; height: 20px; background: #dcdedf; }
.h .fi { margin: 0 0 3px auto; color: #111; }
.h .fi:only-child, .h:nth-child(2) .fi { margin-right: -1px; }
.h .arrow { margin-left: 10px; margin-bottom: 3px; }
.h.blue { background: #eef4fd; }
.h.tan { background: #fef4ea; }
.h .fi.hot { color: #1f9bf5; }
.gbody { display: flex; justify-content: space-between; flex: 1; overflow: hidden; }
.row { width: 1877px; height: 42px; border-bottom: 1px solid #e1e6ec; }
.c { display: flex; align-items: center; padding: 1px 0 0 15px; font-size: 18px; color: #1b2d35; white-space: nowrap; letter-spacing: -.3px; }
.h.pin, .c.pin { border-right: 1.500px solid #b9bcbf; }
.h.pin::after { display: none; }
.box { width: 20px; height: 20px; border: 2px solid #848b90; border-radius: 3px; background: #fff; }
.mini { display: grid; place-items: center; width: 29px; height: 29px; border: 2px solid #e0e7ef; border-radius: 6px; background: #f8fafc; }
.c-code { padding: 5px 0 0 15px; }
.c-data { padding: 0 0 3px 32px; }
.c-plus { padding-left: 30px; color: #2c7be0; }
.pill { display: flex; align-items: center; width: 97px; height: 30px; margin-top: 1px; border: 1.500px solid #e0e7ef; border-radius: 15px; font: 16.500px "DejaVu Sans Mono", monospace; letter-spacing: 0; }
.pill span { width: 58px; height: 100%; padding-left: 9px; line-height: 28px; border-right: 1px solid #e0e7ef; }
.pill svg { margin-left: 10px; }
.gscroll { width: 15px; padding-top: 5px; }
.gscroll i { display: block; width: 9px; height: 82px; margin: 6px 0 0 3px; border-radius: 5px; background: #cbd5e1; }

/* desktop taskbar */
.taskbar { display: flex; align-items: center; flex: none; height: 70px; padding-bottom: 1px; background: linear-gradient(90deg, #dfdece 0, #e3dfc0 8%, #e6dfb9 15%, #dfddc6 22%, #dddcc9 38%, #d8ddda 46%, #dfe1d2 56%, #d9dfe3 63%, #d4dce9 70%, #d8dfe8 85%, #d4dae3 100%); }
.weather { position: relative; display: flex; width: 411px; padding-left: 28px; }
.weather em { position: absolute; left: 46px; top: -1px; width: 24px; text-align: center; color: #fff; font-size: 16px; line-height: 21px; }
.weather div { display: flex; flex-direction: column; margin-left: 1.500px; font-size: 17px; line-height: 24px; letter-spacing: -.2px; }
.weather > svg { margin-bottom: 2px; overflow: visible; }
.weather strong { font-weight: 400; color: #1a1a1a; }
.weather span { color: #5d5a4a; }
.tsearch { display: flex; align-items: center; width: 327px; height: 46px; margin: 0 0 0 21px; padding-left: 15px; border: 1.500px solid #c6c4b2; border-bottom: 2px solid #b8b6a2; border-radius: 23px; background: #f5f4ee; font-size: 20px; letter-spacing: -.35px; color: #5e5c56; }
.tsearch span { margin-left: 15px; }
.flower { margin: 0 5px 0 auto; }
.tv { margin-left: 20px; }
.apps { display: flex; margin-left: 20px; gap: 9px; }
.apps .app { position: relative; display: grid; place-items: center; width: 57px; height: 57px; border-radius: 6px; }
.run::after, .sel::after { content: ""; position: absolute; left: 24px; bottom: -1px; width: 9px; height: 5px; border-radius: 3px; background: #83837e; }
.apps .sel { border-radius: 6px; background: #eceef0; box-shadow: 0 0 0 1px #d3d6d9, 5px 0 0 -1px #dfe3e8; }
.sel::after { left: 17px; bottom: 0; width: 24px; background: #0b76d6; }
.app em { position: absolute; left: 31px; top: 2px; display: grid; place-items: center; width: 24px; height: 24px; border-radius: 50%; background: #761b9c; color: #ecd3f3; font: 700 14px "Liberation Sans", sans-serif; }
.tray { display: flex; align-items: center; margin-left: auto; padding-right: 31px; }
.wf { margin-left: 27px; }
.vo { margin-left: 12px; }
.ba { margin: 0 0 3px 12px; }
.be { margin-left: 25px; }
```
FILE: app.js
```js
const svg = (id, w, h, cls = "") => `<svg class="${cls}" width="${w}" height="${h}"><use href="#${id}"/></svg>`;
const funnel = (cls = "") => svg("i-funnel", 13, 13, "fi " + cls);

const columns = [
  ["", "", false], ["", "", true], ["Code", "", false], ["Data", "", true], ["Name", "pin", true],
  ["Commit", "", true], ["Created", "", true], ["Labels", "", true],
  ["bootstrap", "blue", true], ["ccp_alpha", "blue", true], ["class_weight", "blue", true],
  ["mean_fit_t...", "tan", true], ["mean_scor...", "tan", true], ["mean_test...", "tan", true]
];
document.getElementById("ghead").innerHTML = columns.map(([name, cls, filter]) => {
  const arrow = name === "Created"
    ? '<svg class="arrow" width="9" height="12" viewBox="0 0 9 12"><path d="M4.500 0v11M1 7.500 4.500 11 8 7.500" fill="none" stroke="#111" stroke-width="1.500"/></svg>' : "";
  return `<div class="h ${cls}"><span>${name}</span>${arrow}${filter ? funnel(name === "Labels" ? "hot" : "") : ""}</div>`;
}).join("");

const rows = [
  ["upbeat-shrim...", "9604", "12 minutes ago", "0.098255109...", "0.008265733..."],
  ["wistful-sow-2...", "9604", "12 minutes ago", "0.191677808...", "0.013522672..."],
  ["dapper-slug-...", "9604", "12 minutes ago"],
  ["respected-mi...", "9604", "12 minutes ago", "0.388253736...", "0.024171352..."],
  ["agreeable-ho...", "9604", "12 minutes ago", "0.097737407...", "0.008488941..."],
  ["suave-stoat-7...", "9604", "12 minutes ago", "0.190293169...", "0.013183784..."],
  ["casual-worm...", "d8c2", "a day ago"],
  ["bright-shrim...", "d8c2", "a day ago", "0.380138874...", "0.023953151..."],
  ["rebellious-sh...", "d8c2", "a day ago", "0.196302461...", "0.013596200..."],
  ["invincible-vol...", "d8c2", "a day ago", "0.186299228...", "0.012972402..."],
  ["colorful-croc...", "d8c2", "a day ago", "0.102409934...", "0.008335018..."],
  ["bouncy-cran...", "d8c2", "a day ago", "0.098997259...", "0.008340835..."],
  ["fearless-ram-...", "6da7", "a day ago", "0.190966558...", "0.013531637..."]
];
const cell = (html, cls = "") => `<div class="c ${cls}">${html}</div>`;
document.getElementById("grows").innerHTML = rows.map(([name, commit, created, fit, score]) =>
  '<div class="row">' +
  cell('<span class="box"></span>', "c-box") +
  cell(svg("i-check", 20, 20)) +
  cell(`<span class="mini">${svg("i-code", 19, 13)}</span>`, "c-code") +
  cell(`<span class="mini">${svg("i-db", 14, 16)}</span>`, "c-data") +
  cell(name, "pin") +
  cell(`<span class="pill"><span>${commit}</span>${svg("i-copy", 18, 18)}</span>`) +
  cell(created) +
  cell(svg("i-plus", 13, 13), "c-plus") +
  cell(fit ? "True" : "") + cell(fit ? "0.0" : "") + cell(fit ? "None" : "") +
  cell(fit || "") + cell(score || "") + cell(fit ? "0.929249011..." : "") +
  "</div>").join("");
```
